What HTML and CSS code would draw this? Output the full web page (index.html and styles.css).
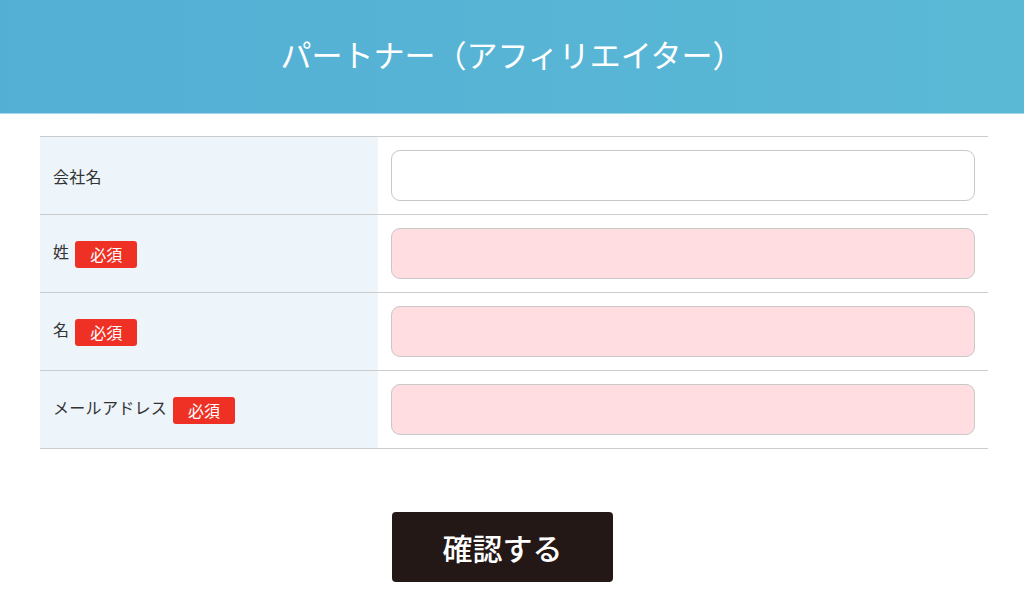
FILE: index.html
```html
<!DOCTYPE html>
<html lang="ja">
<head>
    <meta charset="UTF-8">
    <meta name="viewport" content="width=device-width, initial-scale=1.0">
    <title>パートナー（アフィリエイター）</title>
    <link rel="stylesheet" href="styles.css">
</head>
<body>
    <header class="page-header">
        <h1>パートナー（アフィリエイター）</h1>
    </header>
    <form class="entry-form">
        <table class="form-table">
            <tr>
                <th>会社名</th>
                <td><input type="text" class="field"></td>
            </tr>
            <tr>
                <th>姓<span class="required">必須</span></th>
                <td><input type="text" class="field field-required"></td>
            </tr>
            <tr>
                <th>名<span class="required">必須</span></th>
                <td><input type="text" class="field field-required"></td>
            </tr>
            <tr>
                <th>メールアドレス<span class="required">必須</span></th>
                <td><input type="email" class="field field-required"></td>
            </tr>
        </table>
        <div class="actions">
            <button type="button" class="confirm-button">確認する</button>
        </div>
    </form>
</body>
</html>
```

FILE: styles.css
```css
body {
    margin: 0;
    font-family: "Noto Sans CJK JP", "Noto Sans", sans-serif;
    background: #ffffff;
    color: #333333;
}
.page-header {
    height: 113px;
    background: linear-gradient(90deg, #54afd5, #5ab9d5);
    border-bottom: 1px solid #a3d6ea;
    display: flex;
    justify-content: center;
    align-items: center;
}
.page-header h1 {
    margin: 0 0 6px;
    color: #ffffff;
    font-size: 31px;
    font-weight: 400;
}
.entry-form {
    padding-top: 22px;
}
.form-table {
    width: 948px;
    margin-left: 40px;
    border-collapse: collapse;
}
.form-table tr {
    border-top: 1px solid #cccccc;
}
.form-table tr:last-child {
    border-bottom: 1px solid #cccccc;
}
.form-table th {
    width: 312px;
    padding: 0 13px;
    background: #edf4fa;
    text-align: left;
    font-size: 16px;
    font-weight: 400;
    color: #333333;
    letter-spacing: 0.3px;
    white-space: nowrap;
}
.form-table td {
    padding: 13px;
}
.required {
    display: inline-block;
    margin-left: 6px;
    padding: 2px 15px;
    background: #ee3124;
    color: #ffffff;
    font-size: 16px;
    line-height: 23px;
    letter-spacing: 0;
    border-radius: 3px;
    vertical-align: middle;
}
.field {
    display: block;
    width: 100%;
    height: 51px;
    box-sizing: border-box;
    border: 1px solid #c8c8c8;
    border-radius: 9px;
    background: #ffffff;
    font-size: 16px;
}
.field-required {
    background: #ffdde0;
}
.actions {
    display: flex;
    justify-content: center;
    padding: 63px 19px 0 0;
}
.confirm-button {
    width: 221px;
    height: 70px;
    border: none;
    border-radius: 4px;
    background: #231815;
    color: #ffffff;
    font-family: "Noto Sans CJK JP", sans-serif;
    font-size: 30px;
    font-weight: 500;
    cursor: pointer;
}
```
